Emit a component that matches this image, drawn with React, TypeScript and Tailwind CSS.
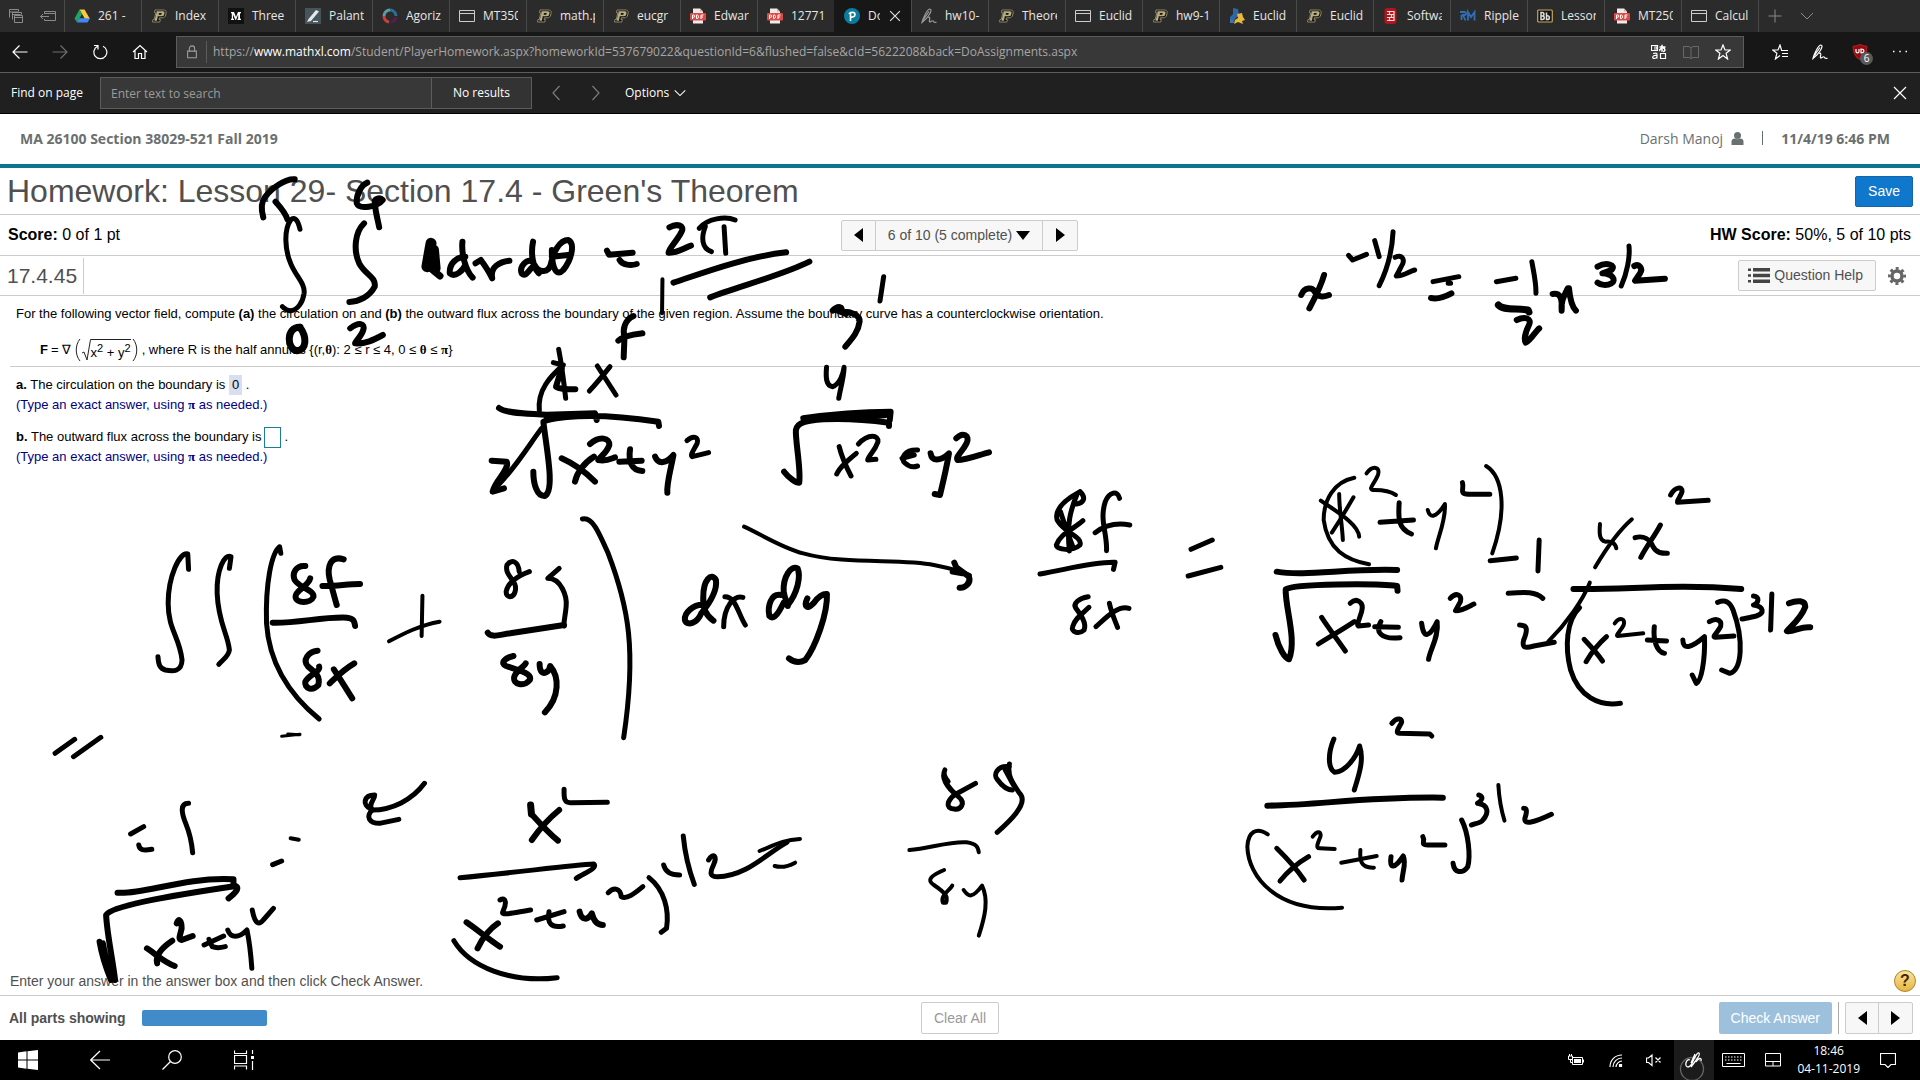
import React, { type ReactNode } from 'react';

/* ---------- browser icons ---------- */

type IconProps = { children: ReactNode; size?: number; className?: string; box?: string };

function Icon({ children, size = 16, box = '0 0 16 16', className = '' }: IconProps) {
  return (
    <svg
      width={size}
      height={size}
      viewBox={box}
      fill="none"
      stroke="currentColor"
      strokeWidth="1.2"
      className={`shrink-0 ${className}`}
      aria-hidden="true"
    >
      {children}
    </svg>
  );
}

const Drive = () => (
  <Icon>
    <path d="M5.5 1.5h5L16 11h-5z" fill="#fbc93d" stroke="none" />
    <path d="M5.5 1.5L0.5 10.5l2.5 4L8 6z" fill="#1fa463" stroke="none" />
    <path d="M3 14.5L5.3 10.3H16l-2.5 4.2z" fill="#4285f4" stroke="none" />
  </Icon>
);
const Purdue = () => (
  <Icon>
    <path
      d="M4 2h8.500c2 0 3 1.200 2.600 3l-.4 2c-.4 1.800-1.600 2.800-3.600 2.800H8.300L8 11.500h1.300L8.800 14H1.500l.5-2.500h1.300l1.500-6.800H3.500z"
      fill="#111"
      stroke="#8f8767"
      strokeWidth="1"
    />
    <path d="M5.500 3.300H12c1.200 0 1.700.7 1.500 1.700l-.3 1.600c-.2 1-.9 1.600-2 1.600H6.800l-.9 4.500H3.500l2-8z" fill="#b8ac84" stroke="none" />
    <path d="M8 5h2.700l-.3 1.700H7.600z" fill="#111" stroke="none" />
  </Icon>
);
const Medium = () => (
  <Icon>
    <rect width="16" height="16" fill="#111" stroke="none" />
    <path d="M3 4h3l2 5 2-5h3v1l-1 .5v5l1 .5v1H9.500v-1l.7-.5V6.500L8 12h-.5L5 6.500v4l1 .5v1H3v-1l.8-.5v-5L3 5z" fill="#fff" stroke="none" />
  </Icon>
);
const Quill = () => (
  <Icon>
    <rect width="16" height="16" fill="#46545b" stroke="none" />
    <path d="M11 2l3 1.500L6 13l-4 1 1.500-3z" fill="#e4e8ea" stroke="none" />
    <path d="M8 13.500h5" stroke="#e4e8ea" />
  </Icon>
);
const Ring = () => (
  <Icon>
    <path d="M8 2a6 6 0 0 0-6 6" stroke="#5f9aa5" strokeWidth="3" />
    <path d="M2 8a6 6 0 0 0 5 6" stroke="#c8413c" strokeWidth="3" />
    <path d="M8 2a6 6 0 0 1 6 6" stroke="#2f6d92" strokeWidth="3" />
    <path d="M14 9a6 6 0 0 1-5 5" stroke="#52204f" strokeWidth="3" />
  </Icon>
);
const Page = () => (
  <Icon className="text-[#cccccc]">
    <path d="M.5 2.500h15v11H.5zM.5 5.500h15" strokeWidth="1" />
  </Icon>
);
const Pdf = () => (
  <Icon>
    <path d="M3 .5h7l3 3V15.500H3z" fill="#f3e9e8" stroke="none" />
    <path d="M10 .5v3h3z" fill="#c9b3b1" stroke="none" />
    <rect y="5" width="16" height="7.500" rx="1" fill="#dc4a48" stroke="none" />
    <path d="M2.500 11V7h1.200a1 1 0 0 1 0 2.200H2.500M6.500 7v3.500h.8c1.600 0 1.600-3.500 0-3.500zM11 11V7h2.500M11 9h2" stroke="#fff" strokeWidth="1" />
  </Icon>
);
const Pearson = () => (
  <Icon>
    <circle cx="8" cy="8" r="8" fill="#0b7c9c" stroke="none" />
    <path d="M6.500 13V4.500M5 6c1-2 6-2.500 6 .5 0 2.500-3 3-4.500 2.300" stroke="#fff" strokeWidth="1.600" />
  </Icon>
);
const Pen = ({ className = 'text-[#9a9a9a]' }: { className?: string }) => (
  <Icon className={className}>
    <path d="M1 14.500C2 10 6 2 8.500 1c2.500 0 1.500 3-.5 6-2 3.500-5 6-7 7.500zM2.500 11.500L8 3.500" />
    <path d="M7 9.500c2-1 2 .5 1.500 2.500s0 2.500 1.500 1.500 2-1 2.500 0 1.500 1 3 .8" />
  </Icon>
);
const Python = () => (
  <Icon>
    <path d="M4 0l5 1 1 5 3 3-4-1-3 3-2 4H1V9l3-3z" fill="#2f66a5" stroke="none" />
    <path d="M8 6l5-1 1 4 2 3-3 1 1 3-5-2-4 2 1-4 3-2z" fill="#e8b93a" stroke="none" />
    <path d="M1 11l3 1 1 3H1z" fill="#3f73b5" stroke="none" />
  </Icon>
);
const Oracle = () => (
  <Icon>
    <rect x="1.500" y="0" width="12" height="16" rx="3" fill="#b3151b" stroke="none" />
    <path d="M4 3.500h7v9H4M4 6.500h7M4 9.500h7M6.500 3.500v3M8.500 6.500v3M6.500 9.500v3" stroke="#f3dcdc" />
  </Icon>
);
const Rm = () => (
  <Icon className="text-[#2f6fb8]">
    <path d="M0 4h4.500c2 0 2 3 0 3H3l2.500 5.500M1.500 7v5M8 12.500V4l3 5 3.500-5v8.500" strokeWidth="1.800" />
  </Icon>
);
const Blackboard = () => (
  <Icon>
    <rect x=".7" y="2" width="14.600" height="12" rx="1" fill="#161616" stroke="#c9a35c" />
    <path d="M4 4.500v7h1.500a1.700 1.700 0 0 0 0-3.500H4h1.200a1.600 1.600 0 0 0 0-3.500zM9.500 4.500v7h1a1.800 1.800 0 0 0 0-3.700h-1" stroke="#ddd" strokeWidth="1.500" />
  </Icon>
);

const tabs: { label: string; icon: ReactNode; active?: boolean }[] = [
  { label: '261 -', icon: <Drive /> },
  { label: 'Index', icon: <Purdue /> },
  { label: 'Three', icon: <Medium /> },
  { label: 'Palant', icon: <Quill /> },
  { label: 'Agoriz', icon: <Ring /> },
  { label: 'MT350', icon: <Page /> },
  { label: 'math.p', icon: <Purdue /> },
  { label: 'eucgr', icon: <Purdue /> },
  { label: 'Edwar', icon: <Pdf /> },
  { label: '12771', icon: <Pdf /> },
  { label: 'Do', icon: <Pearson />, active: true },
  { label: 'hw10-', icon: <Pen /> },
  { label: 'Theore', icon: <Purdue /> },
  { label: 'Euclid', icon: <Page /> },
  { label: 'hw9-1', icon: <Purdue /> },
  { label: 'Euclid', icon: <Python /> },
  { label: 'Euclid', icon: <Purdue /> },
  { label: 'Softwa', icon: <Oracle /> },
  { label: 'Ripple', icon: <Rm /> },
  { label: 'Lesson', icon: <Blackboard /> },
  { label: 'MT250', icon: <Pdf /> },
  { label: 'Calcul', icon: <Page /> },
];

function TabStrip() {
  return (
    <div className="flex h-8 items-stretch bg-[#2b2b2b] text-[#e6e6e6]">
      <div className="flex w-16 shrink-0 items-center justify-center gap-4 text-[#8a8a8a]">
        <button aria-label="Tabs you've set aside">
          <Icon>
            <path d="M1.500 9.500v-8h9v2M1.500 4h9M4.500 11.500v-7h9v2M4.500 6.500h8" strokeWidth="1" />
            <path d="M6.500 7.500h8v7h-8zM6.500 9.500h8" strokeWidth="1" />
          </Icon>
        </button>
        <button aria-label="Set these tabs aside">
          <Icon>
            <path d="M4.500 6V3.500h11v9h-11V11M4.500 5.500h11M.5 8.500H9M3 6L.5 8.500 3 11" strokeWidth="1" />
          </Icon>
        </button>
      </div>
      {tabs.map((t, i) => (
        <div
          key={i}
          className={`flex w-[77px] shrink-0 items-center border-l pl-[9px] ${
            t.active ? 'border-[#171717] bg-[#171717]' : 'border-[#4a4a4a]'
          }`}
        >
          <button className="flex items-center gap-2">
            {t.icon}
            <span className={`overflow-hidden text-left text-[12px] leading-4 whitespace-nowrap ${t.active ? 'w-[12px]' : 'w-[35px]'}`}>
              {t.label}
            </span>
          </button>
          {t.active && (
            <button aria-label="Close tab" className="ml-[9px]">
              <Icon size={12}>
                <path d="M1.500 1.500l13 13M14.500 1.500l-13 13" strokeWidth="1.500" />
              </Icon>
            </button>
          )}
        </div>
      ))}
      <div className="flex items-center gap-4 border-l border-[#4a4a4a] pl-2 text-[#8a8a8a]">
        <button aria-label="New tab">
          <Icon>
            <path d="M8 1.500v13M1.500 8h13" strokeWidth="1" />
          </Icon>
        </button>
        <button aria-label="Tab previews">
          <Icon>
            <path d="M2 5l6 6 6-6" strokeWidth="1" />
          </Icon>
        </button>
      </div>
    </div>
  );
}

function Toolbar() {
  return (
    <div className="flex h-[41px] items-center border-b border-[#5c5c5c] bg-[#171717] text-white">
      <div className="flex w-44 shrink-0 items-center gap-6 pl-3">
        <button aria-label="Back">
          <Icon><path d="M15.500 8H1M7.500 1.500L1 8l6.500 6.500" /></Icon>
        </button>
        <button aria-label="Forward" className="text-[#6e6e6e]">
          <Icon><path d="M.5 8H15M8.500 1.500L15 8l-6.500 6.500" /></Icon>
        </button>
        <button aria-label="Refresh">
          <Icon><path d="M5.500 2.300A6.500 6.500 0 1 0 11 2.200M2 1.500h4v4" /></Icon>
        </button>
        <button aria-label="Home">
          <Icon><path d="M1 8l7-6.500L15 8M3 6.500v8h3.500V9.500h3v5H13v-8" /></Icon>
        </button>
      </div>
      <div className="flex h-8 flex-1 items-center border border-[#5c5c5c] bg-[#383838]">
        <span className="flex w-[30px] justify-center border-r border-[#5c5c5c] py-1 text-[#a0a0a0]">
          <Icon size={14}><path d="M3 7h10v7.500H3zM5 7V4c0-4 6-4 6 0v3" /></Icon>
        </span>
        <a
          href="https://www.mathxl.com/Student/PlayerHomework.aspx?homeworkId=537679022&questionId=6&flushed=false&cId=5622208&back=DoAssignments.aspx"
          className="flex-1 pl-[6px] text-[12px] leading-4 whitespace-nowrap text-[#a6a6a6]"
        >
          https://<span className="text-white">www.mathxl.com</span>
          /Student/PlayerHomework.aspx?homeworkId=537679022&amp;questionId=6&amp;flushed=false&amp;cId=5622208&amp;back=DoAssignments.aspx
        </a>
        <div className="flex items-center gap-4 pr-3">
          <button aria-label="Translate">
            <Icon>
              <path d="M.5 1.500h6v5h-6zM3 3h3v2H3M2 9.500c4-1 4 0 4 1.500v3.500M6 11.500c-5-1-5 3-3 3s3-1 3-2M9.500 9.500h5v5h-5z" />
              <path d="M11 .8v7M8.500 3h6M9 7c-1-1 1-3 3-3s3 3 0 3.500" strokeWidth="1.500" />
            </Icon>
          </button>
          <button aria-label="Reading view" className="text-[#686868]">
            <Icon><path d="M8 3v11.500M.5 2.500H6L8 4l2-1.500h5.500v11H10l-2 1-2-1H.5z" strokeWidth="1" /></Icon>
          </button>
          <button aria-label="Add to favorites">
            <Icon><path d="M8 1l2 5h5.300l-4.200 3.300L12.600 15 8 11.500 3.400 15l1.500-5.700L.7 6H6z" /></Icon>
          </button>
        </div>
      </div>
      <div className="flex w-44 shrink-0 items-center justify-between pr-3 pl-7">
        <button aria-label="Favorites">
          <Icon>
            <path d="M9.500 6L8 1 6 6H.7l4.200 3.300L3.400 15 8 11.500M9 6.500h7M10 9.500h6M10 12.500h6" />
          </Icon>
        </button>
        <button aria-label="Add notes"><Pen className="text-white" /></button>
        <button aria-label="uBlock Origin, 6 blocked" className="relative h-4 w-4">
          <Icon>
            <path d="M8 .5c3 1.500 5 1.800 6.800 1.800C15 9 13 13 8 15.500 3 13 1 9 1.200 2.300 3 2.300 5 2 8 .5z" fill="#8f0d12" stroke="#b21a20" />
            <path d="M4 5v2.500c0 1.700 3 1.700 3 0V5M9 5v3.800c3.800 0 3.800-3.800 0-3.800z" stroke="#fff" />
          </Icon>
          <span className="absolute top-2 left-2 h-[13px] w-[13px] rounded-full bg-[#5a5a5a] text-center text-[10px] leading-[13px]">6</span>
        </button>
        <button aria-label="Settings and more">
          <Icon><path d="M1 7.500h1.500M7.300 7.500h1.500M13.500 7.500H15" strokeWidth="1.500" /></Icon>
        </button>
      </div>
    </div>
  );
}

function FindBar() {
  return (
    <div className="flex h-[41px] items-center border-b border-black bg-[#202020] text-[12px] leading-4 text-white">
      <label htmlFor="find" className="w-[100px] shrink-0 pl-[11px]">Find on page</label>
      <input
        id="find"
        placeholder="Enter text to search"
        className="h-8 w-[332px] border border-[#5c5c5c] bg-[#383838] px-[10px] placeholder:text-[#9c9c9c]"
      />
      <span className="flex h-8 w-[100px] items-center justify-center border border-l-0 border-[#5c5c5c] bg-[#333333]">No results</span>
      <div className="flex items-center gap-6 pl-4 text-[#7c7c7c]">
        <button aria-label="Previous result">
          <Icon><path d="M11.500 1L5 8l6.500 7" /></Icon>
        </button>
        <button aria-label="Next result">
          <Icon><path d="M4.500 1L11 8l-6.500 7" /></Icon>
        </button>
      </div>
      <button className="ml-[21px] flex items-center gap-1">
        Options
        <Icon size={14}><path d="M2 5l6 6 6-6" /></Icon>
      </button>
      <button aria-label="Close find bar" className="mr-3 ml-auto">
        <Icon><path d="M2 2l12 12M14 2L2 14" /></Icon>
      </button>
    </div>
  );
}

/* ---------- homework player ---------- */

const Arrow = ({ dir }: { dir: 'left' | 'right' | 'down' }) => (
  <svg width={dir === 'down' ? 14 : 9} height={dir === 'down' ? 9 : 14} viewBox={dir === 'down' ? '0 0 14 9' : '0 0 9 14'} aria-hidden="true">
    <path d={dir === 'left' ? 'M9 0v14L0 7z' : dir === 'right' ? 'M0 0v14l9-7z' : 'M0 0h14L7 9z'} fill="#000" />
  </svg>
);

function Greek({ children }: { children: string }) {
  return <span className="font-['Liberation_Serif',serif] font-bold">{children}</span>;
}

function Paren({ close = false }: { close?: boolean }) {
  return (
    <svg width="6" height="24" viewBox="0 0 6 24" fill="none" stroke="#222" className="mx-px" aria-hidden="true">
      <path d={close ? 'M1 1c5 6 5 16 0 22' : 'M5 1c-5 6-5 16 0 22'} />
    </svg>
  );
}

function Formula() {
  return (
    <div className="flex h-6 items-center pl-6">
      <b>F</b>
      <span className="px-[3px]">=</span>
      <span>∇</span>
      <span className="w-[3px]" />
      <Paren />
      <svg width="9" height="22" viewBox="0 0 9 22" fill="none" stroke="#222" aria-hidden="true">
        <path d="M0 14l2-1 3 8L8.500.5H9" />
      </svg>
      <span className="h-[22px] border-t border-[#222] pt-[5px] leading-4">
        x<sup className="text-[11px]">2</sup> + y<sup className="text-[11px]">2</sup>
      </span>
      <Paren close />
      <span className="pl-[3px]">
        , where R is the half annulus {'{'}(r,<Greek>θ</Greek>): 2 ≤ r ≤ 4, 0 ≤ <Greek>θ</Greek> ≤ <Greek>π</Greek>
        {'}'}
      </span>
    </div>
  );
}

function Player() {
  return (
    <main className="flex flex-1 flex-col bg-white font-['Liberation_Sans',Arial,sans-serif] text-black">
      <header className="flex h-[54px] items-center justify-between border-b-4 border-[#0d7490] pr-[30px] pb-[2px] pl-5 font-['Open_Sans',sans-serif] text-[14px] text-[#6a7070]">
        <b>MA 26100 Section 38029-521 Fall 2019</b>
        <div className="flex items-center">
          <span>Darsh Manoj</span>
          <svg width="13" height="13" viewBox="0 0 13 13" fill="#6a7070" className="ml-2" aria-hidden="true">
            <circle cx="6.500" cy="3.500" r="3.500" />
            <path d="M.5 13V9.500C.5 7.500 2 6.500 4 6.500c1.500 1 3.500 1 5 0 2 0 3.500 1 3.500 3V13z" />
          </svg>
          <span className="mx-[18px] h-[14px] w-px bg-[#6a7070]" />
          <b>11/4/19 6:46 PM</b>
        </div>
      </header>

      <div className="flex h-[47px] items-center justify-between border-b border-[#cccccc] pr-[7px] pl-[7px]">
        <h1 className="text-[32px] leading-9 text-[#505050]">Homework: Lesson 29- Section 17.4 - Green's Theorem</h1>
        <button className="h-[31px] rounded-xs border border-[#1566a5] bg-[#0f78cc] px-3 text-[14px] text-white">Save</button>
      </div>

      <div className="grid h-[41px] grid-cols-[1fr_auto_1fr] items-center border-b border-[#cccccc] pr-[9px] pl-2 text-[16px]">
        <p><b>Score:</b> 0 of 1 pt</p>
        <div className="flex h-[31px] divide-x divide-[#cccccc] rounded-xs border border-[#cccccc] bg-[#f7f7f7]">
          <button aria-label="Previous question" className="flex w-[34px] items-center justify-center"><Arrow dir="left" /></button>
          <button className="flex items-center gap-1 px-3 text-[14px] text-[#505050]">6 of 10 (5 complete) <Arrow dir="down" /></button>
          <button aria-label="Next question" className="flex w-[34px] items-center justify-center"><Arrow dir="right" /></button>
        </div>
        <p className="text-right"><b>HW Score:</b> 50%, 5 of 10 pts</p>
      </div>

      <div className="flex h-10 items-center justify-between border-b border-[#cccccc] pr-[14px] pl-[7px]">
        <h2 className="flex h-9 items-center border-r border-[#cccccc] pr-[6px] text-[21px] text-[#505050]">17.4.45</h2>
        <div className="flex items-center gap-3">
          <button className="flex h-[31px] items-center gap-1 rounded-xs border border-[#cccccc] bg-[#f7f7f7] pr-3 pl-[9px] text-[14px] text-[#505050]">
            <svg width="22" height="15" viewBox="0 0 22 15" fill="#444" aria-hidden="true">
              <path d="M5 0h17v3.500H5zM5 5.700h17v3.500H5zM5 11.400h17V15H5zM0 .5h3v2.500H0zM0 6.200h3v2.500H0zM0 12h3v2.500H0z" />
            </svg>
            Question Help
          </button>
          <button aria-label="Settings">
            <svg width="18" height="18" viewBox="0 0 18 18" fill="none" stroke="#666" aria-hidden="true">
              <circle cx="9" cy="9" r="5" strokeWidth="3.500" />
              <circle cx="9" cy="9" r="7.600" strokeWidth="2.800" strokeDasharray="2.980 2.980" strokeDashoffset="1.490" />
            </svg>
          </button>
        </div>
      </div>

      <section className="flex-1 text-[13px] leading-5">
        <div className="ml-[10px] h-[71px] border-b border-[#cccccc] pt-2 pl-[6px]">
          <p>
            For the following vector field, compute <b>(a)</b> the circulation on and <b>(b)</b> the outward flux across the boundary of the given region. Assume the boundary curve has a counterclockwise orientation.
          </p>
          <div className="pt-[14px]"><Formula /></div>
        </div>
        <div className="pt-2 pl-4">
          <p><b>a.</b> The circulation on the boundary is <span className="inline-block h-5 bg-[#d9dff0] px-[3px]">0</span> .</p>
          <p className="text-[#000080]">(Type an exact answer, using <Greek>π</Greek> as needed.)</p>
        </div>
        <div className="pt-3 pl-4">
          <div className="flex h-5 items-center">
            <label htmlFor="flux"><b>b.</b> The outward flux across the boundary is</label>
            <input id="flux" className="mx-[3px] h-[21px] w-[17px] border border-[#1a7f95] px-px" />
            <span>.</span>
          </div>
          <p className="text-[#000080]">(Type an exact answer, using <Greek>π</Greek> as needed.)</p>
        </div>
      </section>

      <div className="flex h-[30px] items-center justify-between border-b border-[#cccccc] pt-px pr-1 pl-[10px] text-[14px] text-[#505050]">
        <p>Enter your answer in the answer box and then click Check Answer.</p>
        <button
          aria-label="Help"
          className="h-[22px] w-[22px] rounded-full border border-[#a8842c] bg-linear-to-b from-[#fbe39a] to-[#e9b53c] text-[16px] leading-5 font-bold text-[#3b2a08]"
        >
          ?
        </button>
      </div>

      <footer className="grid h-11 grid-cols-[1fr_auto_1fr] items-center px-[7px] text-[14px] text-[#505050]">
        <div className="flex items-center gap-4 pl-[2px]">
          <b>All parts showing</b>
          <div role="progressbar" aria-label="Parts showing" className="h-4 w-[125px] rounded-xs bg-[#428bca]" />
        </div>
        <button className="h-8 rounded-xs border border-[#cccccc] px-3 text-[#999999]">Clear All</button>
        <div className="flex h-8 items-center justify-end">
          <button className="h-8 rounded-xs bg-[#9dc1dc] px-3 text-white">Check Answer</button>
          <span className="mx-[6px] h-8 w-px bg-[#aaaaaa]" />
          <div className="flex h-8 divide-x divide-[#cccccc] rounded-xs border border-[#cccccc] bg-[#f7f7f7]">
            <button aria-label="Previous part" className="flex w-[33px] items-center justify-center"><Arrow dir="left" /></button>
            <button aria-label="Next part" className="flex w-[33px] items-center justify-center"><Arrow dir="right" /></button>
          </div>
        </div>
      </footer>
    </main>
  );
}

/* ---------- taskbar ---------- */

function Taskbar() {
  return (
    <div className="flex h-10 items-center justify-between bg-black text-white">
      <div className="flex items-center gap-[52px] pl-[18px]">
        <button aria-label="Start">
          <Icon size={20} box="0 0 20 20">
            <path d="M0 2.500l8.500-1.200v8.200H0zM9.500 1.200L20 0v9.500H9.500zM0 10.500h8.500v8.200L0 17.500zM9.500 10.500H20V20L9.500 18.800z" fill="#fff" stroke="none" />
          </Icon>
        </button>
        <button aria-label="Back">
          <Icon size={20} box="0 0 20 20"><path d="M20 10H.7M10 1L.7 10l9.300 9" /></Icon>
        </button>
        <button aria-label="Search">
          <Icon size={20} box="0 0 20 20"><circle cx="13" cy="7" r="6.300" /><path d="M8.500 11.500L.5 19.500" /></Icon>
        </button>
        <button aria-label="Task view">
          <Icon size={20} box="0 0 20 20">
            <path d="M.5.5v3h12v-3M.5 5.500h12v8H.5zM.5 19.500v-3.500h12v3.500M18.500 0v4M18.500 11v9" />
            <path d="M17 6h3v3h-3z" fill="#fff" stroke="none" />
          </Icon>
        </button>
      </div>
      <div className="flex h-full items-center pr-6">
        <button aria-label="Battery">
          <Icon>
            <path d="M4.500 5.500h10v7h-10z" strokeWidth="1" />
            <path d="M6 7h7v4H6zM14.500 7.500H16v3h-1.500z" fill="#fff" stroke="none" />
            <path d="M.5 4v3.500h4V4zM1.500 2v2M3.500 2v2M2.500 7.500v3H5" strokeWidth="1" fill="#000" />
          </Icon>
        </button>
        <button aria-label="Network" className="ml-6">
          <Icon>
            <path d="M2 15C2 8 7 3 14 3M5 15c0-5 4-9 9-9M8 15c0-3 3-6 6-6" />
            <path d="M11.500 12.500h2v2h-2z" fill="#fff" />
          </Icon>
        </button>
        <button aria-label="Volume muted" className="ml-[22px]">
          <Icon><path d="M.5 6v4.500h2l3.500 3V3L2.500 6zM9.500 5.500l5 5M14.500 5.500l-5 5" /></Icon>
        </button>
        <button aria-label="Windows Ink workspace" className="ml-3 flex h-10 w-10 items-center justify-center overflow-hidden bg-[#1b1b1b]">
          <svg width="40" height="40" viewBox="0 0 40 40" fill="none" stroke="#fff" strokeWidth="1.300" aria-hidden="true">
            <circle cx="18" cy="29" r="11.500" stroke="#666" />
            <path d="M16 20c-4-2-6 7-2 7 3 0 4-4 6-8s4-7 5-6 0 3-2 6l-6 8M21 14l-4 9M22 22c2-4 6-5 5-1" />
          </svg>
        </button>
        <button aria-label="Touch keyboard" className="ml-2">
          <svg width="23" height="14" viewBox="0 0 23 14" fill="none" stroke="#fff" aria-hidden="true">
            <path d="M.5.5h22v13H.5z" />
            <path d="M3 4h17M3 7h17" strokeDasharray="1.500 1.500" />
            <path d="M4.500 10.500h14" />
          </svg>
        </button>
        <button aria-label="Touchpad" className="ml-5">
          <svg width="16" height="14" viewBox="0 0 16 14" fill="none" stroke="#fff" aria-hidden="true">
            <path d="M.5.500h15v12.500H.5zM.5 8.500h15M8 8.500V13" />
          </svg>
        </button>
        <time className="ml-4 text-center text-[12px] leading-[18px]">
          18:46
          <br />
          04-11-2019
        </time>
        <button aria-label="Action center" className="ml-5">
          <Icon><path d="M.5 1.500h15v11h-4.500L8 15.500l-3-3H.5z" /></Icon>
        </button>
      </div>
    </div>
  );
}

/* ---------- handwriting layer ---------- */

type Stroke = [width: number, d: string];
type Region = { x: number; y: number; sx: number; sy: number; strokes: Stroke[] };

/* Each region keeps its own origin and recording resolution (units per pixel). */
const ink: Region[] = [
  {
    x: 0, y: 110, sx: 2.45, sy: 3,
    strokes: [
      [6, 'M722 208C700 205 665 235 650 260C640 275 640 300 645 322M675 275C690 295 700 310 704 328'],
      [5, 'M735 358C730 330 722 318 712 330C695 360 698 420 712 460C725 500 748 520 745 550C742 575 730 602 710 602C700 600 697 595 692 590'],
      [6, 'M900 218C885 225 872 255 874 280C880 300 925 290 938 270C930 260 918 268 918 275C920 310 926 330 929 352'],
      [6, 'M892 340C870 365 865 420 880 460C895 495 922 500 918 530C905 560 880 575 856 576'],
      [7, 'M735 652C700 650 702 720 728 722C752 720 752 680 735 652'],
      [6, 'M858 655C880 635 895 640 890 660C885 680 870 695 870 700C895 702 915 690 938 675'],
      [11, 'M1056 400L1046 470L1062 420L1066 475'],
      [7, 'M1060 480L1078 498'],
      [6, 'M1133 395C1130 430 1140 480 1158 503M1140 440C1120 440 1100 460 1102 490C1115 505 1135 480 1140 465'],
      [6, 'M1165 460L1178 450C1190 470 1200 490 1206 505C1200 470 1225 455 1248 452'],
      [6, 'M1306 395C1300 430 1305 470 1320 490M1305 455C1290 445 1272 470 1278 490C1290 505 1300 470 1310 465C1320 490 1345 490 1350 460C1355 430 1370 390 1392 390C1410 400 1400 450 1380 480C1365 500 1352 480 1352 420M1352 440L1392 435'],
      [6, 'M1487 422L1492 434L1550 428M1518 450C1525 465 1545 468 1560 462'],
      [6, 'M1552 618C1530 630 1525 660 1530 680L1528 742M1515 692C1530 675 1560 672 1574 670'],
    ],
  },
  {
    x: 480, y: 340, sx: 3, sy: 3,
    strokes: [
      [6, 'M57 204C80 222 150 220 200 224L345 220L350 240M200 240C300 218 420 228 535 245L537 258'],
      [6, 'M200 230L345 226'],
      [5, 'M236 28C244 70 252 130 257 175M220 68L250 75C210 110 172 150 178 212'],
      [6, 'M245 85L228 140C240 148 270 148 286 148'],
      [5, 'M352 78L408 165M390 80C370 105 350 130 328 153'],
      [6, 'M35 362L80 365C90 390 45 420 38 455L72 445'],
      [5, 'M50 440C110 380 150 310 185 265'],
      [6, 'M160 395C160 430 170 470 195 468C225 450 200 330 190 245L215 235'],
      [6, 'M245 355C290 375 320 400 345 425M342 350C310 370 290 400 285 425'],
      [6, 'M330 312C360 285 390 295 388 315C380 340 360 350 355 360C380 365 395 355 405 352'],
      [6, 'M450 328C445 365 455 392 487 393M418 365L485 362'],
    ],
  },
  {
    x: 640, y: 110, sx: 2.45, sy: 3,
    strokes: [
      [6, 'M72 352C90 340 110 345 102 365C90 395 70 415 70 428C90 430 110 412 125 407'],
      [5, 'M145 355C165 325 210 318 233 330M160 350C150 380 150 415 175 425M206 350L210 430'],
      [6, 'M82 518C150 490 260 440 358 427M172 562C240 530 350 495 415 455'],
      [4, 'M55 508L54 610'],
      [5, 'M597 500L588 573'],
      [6, 'M472 602C485 585 500 590 492 606C515 603 540 615 538 635C535 665 520 685 503 710M480 600L505 612'],
      [5, 'M457 772C455 800 455 828 472 830C490 822 498 790 500 772C500 800 490 840 487 865'],
      [6, 'M353 1085C365 1105 385 1120 390 1118C395 1080 380 990 382 960C385 935 410 932 450 928C500 925 560 930 610 938L610 948M400 925C470 912 550 905 614 905L612 930M420 922L600 916'],
      [5, 'M488 1010C495 1045 505 1070 517 1098M530 1030C510 1050 490 1070 482 1092'],
      [5, 'M535 1002C560 970 585 975 583 995C575 1025 560 1035 558 1050L578 1048'],
      [5, 'M680 1020C650 1018 635 1045 650 1060C660 1072 670 1072 680 1068M642 1045L672 1035'],
      [6, 'M712 1030C715 1055 735 1055 757 1030C750 1080 740 1130 735 1155L722 1152'],
      [6, 'M775 985C790 965 810 975 800 1000C790 1025 772 1040 778 1050C800 1050 830 1035 855 1027'],
      [6, 'M37 1040C45 1065 65 1060 82 1035C75 1080 65 1120 67 1148'],
      [5, 'M115 992C130 975 145 980 140 1000C132 1020 122 1035 128 1040L168 1028'],
    ],
  },
  {
    x: 1280, y: 110, sx: 2.45, sy: 3,
    strokes: [
      [6, 'M52 555C60 530 80 532 85 545C95 562 105 562 120 555M108 495C100 530 85 565 72 595'],
      [5, 'M168 436L178 450L212 433M232 392L243 440M277 365C275 420 262 480 243 527'],
      [5, 'M282 442C300 432 308 450 297 470L285 498C305 498 315 485 330 480'],
      [5, 'M375 515L438 500M412 520L418 520'],
      [6, 'M370 564C385 568 405 560 420 550'],
      [5, 'M530 515L578 505M617 455C622 490 628 520 627 550'],
      [7, 'M535 585C545 600 570 595 608 600L610 606'],
      [6, 'M580 630C600 618 618 625 610 645C600 670 598 690 602 698C615 690 625 665 635 655'],
      [6, 'M668 552C685 548 692 560 690 602M705 535C695 560 688 575 690 600M708 535C710 560 715 590 725 602'],
      [6, 'M778 470C800 455 825 465 812 480L790 490C815 492 825 510 812 520C800 528 785 525 778 518'],
      [5, 'M855 408C858 440 850 490 836 528'],
      [6, 'M868 468C880 460 890 475 882 490L870 512L943 506'],
    ],
  },
  {
    x: 0, y: 500, sx: 2.45, sy: 3,
    strokes: [
      [5, 'M462 208L460 162C440 155 412 230 412 310C412 390 440 410 446 480C445 515 425 515 405 510C390 505 388 490 387 470'],
      [5, 'M562 205L566 170C550 160 530 210 532 280C535 370 558 400 562 450C560 470 545 480 536 493'],
      [5, 'M688 160L685 140C665 160 650 250 653 370C660 500 715 590 782 657'],
      [6, 'M748 198C725 195 715 220 722 240C735 265 770 270 768 290C762 310 725 312 724 290C724 270 755 260 760 235'],
      [6, 'M842 178C810 165 800 200 808 240C815 270 820 295 825 315M790 258C820 260 850 252 882 252'],
      [6, 'M668 368C730 370 790 350 850 353C868 355 868 365 870 378'],
      [6, 'M778 452C755 455 740 480 755 500C775 520 785 530 780 555C765 575 745 565 748 545C755 525 785 515 782 500'],
      [6, 'M868 490C840 510 825 530 808 550M818 508C835 540 850 570 863 595'],
      [4, 'M1035 287L1033 408M953 424C990 400 1030 375 1077 365'],
      [5, 'M1272 215C1270 185 1255 175 1242 195C1235 230 1270 240 1262 275C1258 295 1240 295 1240 275C1245 245 1275 225 1297 215'],
      [5, 'M1370 205L1342 235C1375 235 1390 290 1387 320C1385 350 1380 370 1382 378'],
      [6, 'M1195 398C1205 415 1225 403 1250 400L1382 375'],
      [6, 'M1258 468C1235 475 1225 490 1240 498C1270 510 1305 520 1298 540C1285 560 1255 555 1260 530C1265 510 1285 500 1288 490'],
      [6, 'M1322 492C1322 515 1330 528 1345 510L1348 498C1370 530 1372 590 1335 637'],
      [5, 'M1427 57C1450 50 1465 90 1490 160C1540 320 1560 450 1528 713'],
      [5, 'M135 760L183 718M180 770L247 712'],
      [3, 'M690 709L735 703M705 702L735 704'],
      [5, 'M320 1002L352 980M340 1035C342 1050 350 1052 372 1048'],
      [5, 'M462 910C440 910 445 940 455 970C465 1000 470 1030 472 1058'],
      [6, 'M288 1178C350 1185 450 1130 572 1138L572 1152M252 1330C258 1370 266 1410 276 1438L282 1440C275 1370 262 1300 260 1245C270 1220 400 1190 578 1158C588 1165 575 1180 560 1195'],
      [6, 'M244 1325C250 1370 262 1410 272 1440'],
      [6, 'M360 1345C385 1365 400 1385 428 1398M422 1322C400 1340 380 1365 385 1390'],
      [6, 'M433 1270C438 1252 445 1262 445 1285C442 1305 435 1318 445 1320L472 1308'],
      [5, 'M500 1335L548 1308M512 1318L520 1340C530 1345 545 1342 552 1340'],
      [5, 'M558 1290C565 1315 585 1315 605 1290C612 1330 615 1370 617 1405M618 1230C625 1275 635 1275 645 1260L670 1225'],
      [4, 'M712 1015L732 1019M668 1095L690 1083'],
      [5, 'M668 1094L690 1083'],
      [5, 'M910 928C885 915 892 885 918 885C918 900 900 915 912 930C960 930 1010 900 1040 850'],
      [5, 'M912 930C895 950 905 970 930 970L977 958'],
      [7, 'M1300 915L1302 942'],
      [6, 'M1302 942C1330 980 1350 1005 1367 1022'],
      [6, 'M1370 930C1340 960 1320 990 1303 1020'],
      [5, 'M1382 868C1382 890 1380 910 1400 908L1488 907'],
      [5, 'M1127 1133C1250 1120 1400 1095 1455 1092C1465 1105 1430 1120 1412 1135'],
      [6, 'M1143 1267C1170 1290 1200 1320 1225 1340M1220 1270C1195 1290 1180 1320 1170 1345'],
      [5, 'M1225 1200C1240 1190 1242 1210 1232 1235C1225 1250 1270 1235 1300 1230'],
      [5, 'M1315 1260L1382 1235M1345 1235C1340 1270 1350 1285 1380 1278'],
      [6, 'M1420 1235C1425 1262 1440 1262 1450 1240C1455 1265 1465 1275 1477 1275'],
      [5, 'M1490 1178C1505 1160 1520 1165 1522 1190C1535 1200 1555 1180 1575 1160'],
      [5, 'M1112 1322C1150 1400 1250 1450 1365 1433'],
    ],
  },
  {
    x: 640, y: 480, sx: 2.45, sy: 3,
    strokes: [
      [6, 'M160 375C130 370 108 400 110 420C115 440 140 430 150 400C170 370 190 330 186 300C175 275 155 300 155 350C153 390 165 410 180 422'],
      [5, 'M208 350C235 350 240 400 258 435M252 352C230 345 205 380 205 440'],
      [6, 'M345 345C320 340 312 380 317 408C330 425 345 385 352 368M362 375C385 340 395 290 386 265C370 255 350 290 352 335C355 360 362 370 362 378'],
      [6, 'M410 355C400 380 410 390 425 370C435 350 450 340 458 342C460 400 430 500 405 540C390 550 375 545 365 535'],
      [4, 'M255 140C300 165 350 205 400 220C500 255 640 235 720 255C760 265 790 275 808 285'],
      [6, 'M770 248L775 262L806 290C812 310 795 325 783 323M766 275L790 280'],
      [5, 'M1078 35C1040 60 1015 90 1022 120C1040 160 1085 170 1078 195C1060 215 1020 210 1020 195C1030 160 1060 150 1085 122M1078 35C1095 55 1085 70 1070 72M1070 45C1055 90 1045 130 1052 213M1030 95L1045 150L1062 205'],
      [5, 'M1175 55C1170 30 1150 35 1140 65C1125 120 1145 160 1143 212M1115 158C1140 135 1170 128 1200 135'],
      [5, 'M980 282C1040 270 1110 245 1164 247L1160 268'],
      [5, 'M1098 350C1075 355 1060 370 1068 385C1080 405 1095 430 1088 450C1075 465 1055 455 1060 440C1065 415 1085 400 1100 382'],
      [5, 'M1150 370C1155 400 1165 425 1170 442M1198 385C1170 375 1140 415 1117 440'],
      [5, 'M1350 208L1402 180M1343 288L1423 262'],
      [5, 'M755 905C745 890 742 880 747 870C735 900 765 935 780 950C800 970 785 990 770 987C745 985 755 960 770 945L822 910'],
      [5, 'M905 860C875 855 865 885 875 898C885 915 900 930 912 930M905 852C900 885 910 905 930 940C955 970 900 1030 875 1057M895 870L915 915'],
      [4, 'M660 1110C710 1105 760 1083 800 1087C825 1092 828 1100 830 1117'],
      [4, 'M745 1170C715 1185 700 1200 720 1215C750 1240 755 1250 750 1268L742 1268C735 1245 760 1230 765 1217'],
      [4, 'M793 1230C805 1252 815 1255 838 1217C855 1260 845 1310 830 1367'],
      [5, 'M22 1193C60 1230 72 1290 65 1345L52 1357'],
      [5, 'M58 1155C62 1175 75 1185 97 1185'],
      [5, 'M106 1068C110 1120 120 1170 133 1213'],
      [5, 'M168 1140C180 1115 190 1130 180 1155C170 1180 172 1190 190 1190C260 1190 310 1120 360 1087'],
      [4, 'M293 1113C330 1095 350 1080 392 1077M330 1158C350 1165 365 1158 380 1148'],
    ],
  },
  {
    x: 1240, y: 440, sx: 2.45, sy: 3,
    strokes: [
      [4, 'M280 113C230 125 205 180 205 240C215 330 260 360 316 373'],
      [4, 'M198 182C230 210 290 250 292 290M243 162C243 210 250 250 252 300M278 172C260 210 240 250 225 278'],
      [4, 'M310 100C325 75 345 80 338 105C328 135 310 150 330 150C350 150 370 155 382 165'],
      [5, 'M390 188C388 230 385 265 420 282M343 247L425 240'],
      [4, 'M460 210C465 235 480 235 502 192C505 240 485 290 480 325'],
      [5, 'M545 128C550 150 535 160 560 163L612 163'],
      [4, 'M603 78C645 110 655 210 618 340'],
      [5, 'M613 362L677 354M733 300L730 393'],
      [6, 'M90 395C160 410 260 385 385 390'],
      [6, 'M87 585C95 625 110 655 120 658C140 600 110 500 112 448C130 430 340 430 385 438L386 452'],
      [5, 'M200 532C220 570 240 600 258 633M280 545C250 570 220 590 192 612M270 490C285 472 305 485 298 515C292 540 285 555 290 558L315 555'],
      [5, 'M330 560L388 562M345 545C330 575 345 600 392 593'],
      [5, 'M445 550C450 600 465 590 483 545C488 590 465 630 462 658'],
      [5, 'M515 475C530 455 545 465 540 485L528 512C545 512 560 500 573 492'],
      [5, 'M657 460C700 455 725 455 742 475'],
      [5, 'M685 555C705 555 705 570 695 600C690 625 700 625 720 618L770 607'],
      [4, 'M857 428C840 480 800 550 755 605M882 252C880 280 880 300 895 305C910 302 920 310 922 325M960 238C930 270 900 320 870 382'],
      [5, 'M968 293C990 285 1005 300 1012 320C1020 340 1035 340 1047 340M1030 255C1015 290 995 320 982 352'],
      [5, 'M1055 165C1065 140 1085 138 1083 155C1080 170 1070 180 1072 187L1147 181'],
      [6, 'M817 447C950 450 1060 430 1228 447'],
      [5, 'M832 503C800 540 795 620 810 690C830 770 880 800 932 790'],
      [5, 'M843 598C860 620 875 640 888 663M898 590C875 615 860 640 848 665'],
      [4, 'M918 550C930 530 945 535 940 555C932 575 920 585 925 588L988 580'],
      [5, 'M1015 560C1012 600 1020 635 1040 640M998 600L1045 603'],
      [5, 'M1085 600C1085 630 1105 625 1138 590C1140 660 1130 725 1118 730L1108 705'],
      [5, 'M1150 545C1170 530 1185 545 1175 565C1168 580 1155 592 1165 592L1210 588'],
      [5, 'M1170 487C1190 478 1200 485 1208 510C1235 600 1230 690 1200 700L1180 690'],
      [5, 'M1258 468C1275 470 1270 490 1258 495C1285 500 1285 520 1265 528C1250 532 1240 535 1230 537'],
      [5, 'M1303 462L1300 570'],
      [6, 'M1345 490C1365 480 1385 480 1385 500C1375 535 1345 565 1340 573C1355 577 1375 558 1397 562'],
      [5, 'M230 897C215 940 215 985 232 997C260 995 285 950 293 918C305 960 290 1010 280 1050'],
      [5, 'M372 850C385 830 400 835 395 850C388 865 380 880 390 880L465 882L470 888'],
      [6, 'M67 1097C200 1095 300 1070 497 1073'],
      [4, 'M68 1183C40 1160 20 1175 18 1220C20 1310 90 1420 250 1403'],
      [5, 'M90 1225C115 1255 140 1290 157 1320M168 1250C140 1270 120 1290 98 1323'],
      [4, 'M178 1190C190 1170 200 1175 197 1190C190 1210 185 1225 195 1225L232 1227'],
      [4, 'M295 1230C293 1260 295 1285 328 1283M248 1268L335 1248'],
      [5, 'M370 1250C365 1290 380 1285 400 1248C408 1270 398 1295 397 1320M448 1190C455 1205 440 1215 460 1215L502 1215'],
      [5, 'M543 1140C560 1180 565 1250 558 1280C545 1302 525 1300 522 1270'],
      [5, 'M585 1065C600 1070 590 1085 582 1090C610 1095 610 1120 595 1140C590 1150 575 1150 567 1155'],
      [4, 'M633 1035C635 1080 640 1110 648 1142'],
      [5, 'M695 1105C705 1105 702 1120 698 1135C695 1155 720 1148 763 1123'],
    ],
  },
];

function Ink() {
  return (
    <svg
      viewBox="0 0 1920 1080"
      preserveAspectRatio="xMinYMin meet"
      className="pointer-events-none absolute inset-0 h-full w-full"
      fill="none"
      stroke="#000"
      strokeLinecap="round"
      strokeLinejoin="round"
      aria-hidden="true"
    >
      {ink.map((r, i) => (
        <g key={i} transform={`translate(${r.x} ${r.y}) scale(${1 / r.sx} ${1 / r.sy})`}>
          {r.strokes.map(([w, d], j) => (
            <path key={j} d={d} strokeWidth={w} vectorEffect="non-scaling-stroke" />
          ))}
        </g>
      ))}
    </svg>
  );
}

export default function App() {
  return (
    <div className="relative flex min-h-screen flex-col font-['Open_Sans','Noto_Sans',sans-serif]">
      <TabStrip />
      <Toolbar />
      <FindBar />
      <Player />
      <Taskbar />
      <Ink />
    </div>
  );
}
